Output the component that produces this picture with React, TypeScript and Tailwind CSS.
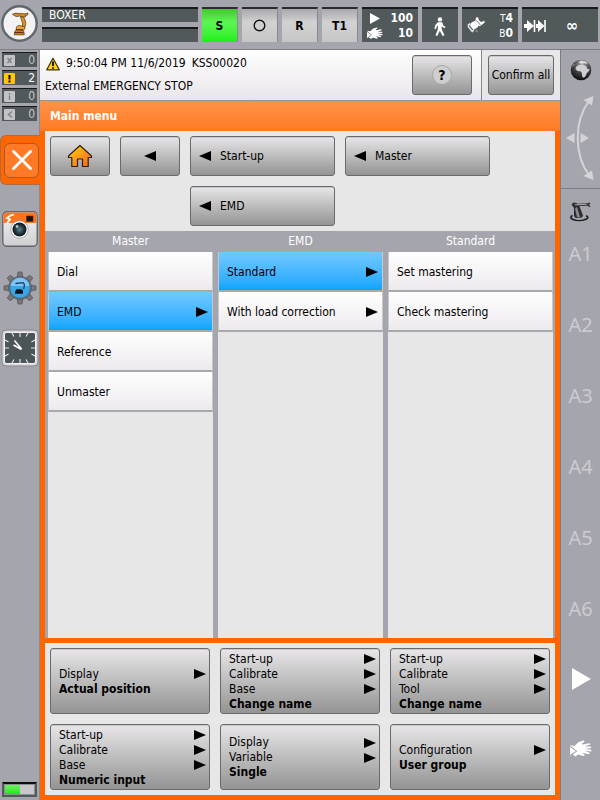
import type { ReactNode } from 'react';

const greyButton =
  'rounded-[3px] border border-[#6a6a6c] bg-linear-to-b from-[#e8e6e8] via-[#bebdbe] to-[#949494] shadow-[inset_0_1px_0_#c9c7c9]';
const darkPanel = 'border-t-2 border-[#17191a] bg-[#51595a] text-white';

function ArrowRight() {
  return (
    <svg className="h-3 w-3 shrink-0" viewBox="0 0 12 12" aria-hidden="true">
      <path d="M0 1 12 6 0 11z" fill="#000" />
    </svg>
  );
}

function ArrowLeft() {
  return (
    <svg className="h-3 w-3 shrink-0" viewBox="0 0 12 12" aria-hidden="true">
      <path d="M12 1 0 6l12 5z" fill="#000" />
    </svg>
  );
}

function Hand({ className }: { className: string }) {
  return (
    <svg className={className} viewBox="0 0 22 18" aria-hidden="true">
      <path
        d="M0 5.200 4.500 6 8 2.500 13 .6q1.600-.3 1.500 1L11.500 4 13 4.600 19 3.200q1.500 0 1.200 1.300L14.500 6.600l6-.1q1.500.6 0 1.800l-6 .6 6.500.8q1.200.9-.2 1.700l-6.500-.7 5 1.900q.8 1.100-.6 1.600L12 12.700l2.500 2q.5 1.300-1 1.400L8 14.500 5.500 16.500 2.500 14.200l3-3z"
        fill="#fff"
      />
      <path d="M0 6.500 5.500 11 0 15.500z" fill="#fff" />
      <path d="m.5 6.800 6.300 4.400L.5 15.300" stroke="#9a9aa0" strokeWidth=".9" fill="none" />
    </svg>
  );
}

function RobotLogo() {
  return (
    <svg className="h-[42px] w-10 shrink-0" viewBox="0 0 40 42" aria-label="Robot" role="img">
      <circle cx="19.500" cy="23.500" r="17.200" fill="#f3f2f4" stroke="#5f686a" strokeWidth="2.400" />
      <g stroke="#4a3312" strokeWidth=".7" strokeLinejoin="round">
        <path d="m12.500 14.300 2.500-1 10 .5 3-.8-.5 2-2.500.7.500 1.300-2.500.3-3-1.300-4 .5z" fill="#e08a1c" />
        <path d="m20.500 16.800 2.500-.3 2 3.500.8 3.500-1 4-2.800-.5.800-3z" fill="#e8941f" />
        <path d="m16.500 27 1.500-1.500 3.500.5 3 .8.500 2-2 1.700h-7z" fill="#f2a62a" />
        <path d="M14.800 31.500 16.500 30h6l1.300 1.500.5 3.300h-10z" fill="#d47b13" />
      </g>
      <path d="M14.500 32.500h9M16 29.500h7" stroke="#4c2c08" strokeWidth=".9" />
    </svg>
  );
}

function Walker() {
  return (
    <svg className="mt-px h-[19px] w-[12px]" viewBox="0 0 12 19" aria-hidden="true">
      <circle cx="6" cy="2.400" r="2.200" fill="#fff" />
      <path d="M3.800 5.300h4.400l1 3 2.300 1.700-1 1.200L7.600 9.500l.2 3 2.700 5.800-2 .7L5.800 13.800 3.300 19l-1.800-.8 2.300-5.700.2-4-1.200 1-.8 2.800-1.600-.5.900-3.800z" fill="#fff" />
    </svg>
  );
}

function ToolGlyph() {
  return (
    <svg className="h-[17px] w-[18px]" viewBox="0 0 18 17" aria-hidden="true">
      <path d="M4.500 5.500 8.500 3.500 12 8 11 10 6.500 13 3 8.500z" fill="#fff" />
      <path d="m8.500 3.500.5-3L11 .2l1 3L14 5l3.300-1.200.5 1.700L14 8.500l-2 .8z" fill="#fff" />
      <path d="M9.500 3.500 13.500 8" stroke="#51595a" strokeWidth=".8" />
      <path d="M3.500 6.500.8 8.500M1 9l4 5.200M6.500 13l-1.500 2" stroke="#dfe2e2" strokeWidth="1.700" fill="none" />
      <circle cx="9.500" cy="14" r="1.300" fill="#80888a" />
    </svg>
  );
}

function StepGlyph() {
  return (
    <svg className="h-[14px] w-[22px]" viewBox="0 0 22 14" aria-hidden="true">
      <path d="M0 5h3V1l7 6-7 6V9H0zM12 5h2V1l6.500 6-6.500 6V9h-2z" fill="#fff" />
      <path d="M10.500 1v12M21 1v12" stroke="#fff" strokeWidth="1.600" />
    </svg>
  );
}

function WarningTriangle() {
  return (
    <svg className="h-[14px] w-[14px] shrink-0" viewBox="0 0 14 14" aria-hidden="true">
      <path d="M7 1.200 13.300 12.800H.7z" fill="#ffd21a" stroke="#3a3008" strokeWidth="1.200" strokeLinejoin="round" />
      <path d="M7 4.500v4.500M7 10.200v1.500" stroke="#000" strokeWidth="1.700" />
    </svg>
  );
}

function House() {
  return (
    <svg className="h-[24px] w-[26px]" viewBox="0 0 26 24" aria-hidden="true">
      <defs>
        <linearGradient id="house" x1="0" y1="0" x2="1" y2="1">
          <stop offset="0" stopColor="#ffe000" />
          <stop offset=".6" stopColor="#ff8a1c" />
          <stop offset="1" stopColor="#ff6a10" />
        </linearGradient>
      </defs>
      <path d="M13 1.500 24.500 12v1.500h-3.300v9H15.500V15h-5v7.500H4.800v-9H1.500V12z" fill="url(#house)" stroke="#2a2018" strokeWidth="1.200" strokeLinejoin="round" />
    </svg>
  );
}

function Camera() {
  return (
    <svg className="h-9 w-9" viewBox="0 0 36 36" aria-hidden="true">
      <defs>
        <linearGradient id="camBody" x1="0" y1="0" x2="0" y2="1">
          <stop offset="0" stopColor="#f4f4f4" />
          <stop offset="1" stopColor="#cfcfd1" />
        </linearGradient>
        <radialGradient id="lens">
          <stop offset="0" stopColor="#5d8a8c" />
          <stop offset=".5" stopColor="#2a4350" />
          <stop offset="1" stopColor="#0c1014" />
        </radialGradient>
      </defs>
      <rect x=".8" y=".8" width="34.400" height="34.400" rx="4" fill="url(#camBody)" stroke="#66666a" strokeWidth="1.400" />
      <path d="M1.500 12V5a3.500 3.500 0 0 1 3.500-3.500h26A3.500 3.500 0 0 1 34.500 5v7z" fill="#ff7420" />
      <path d="M12 3.500 8.500 4.500 5 7l3 1.500L5 12" stroke="#fff" strokeWidth="1.800" fill="none" />
      <rect x="24.500" y="5" width="6.500" height="5.500" fill="#1a1512" stroke="#642b0a" strokeWidth=".6" />
      <circle cx="17.500" cy="18.500" r="8.800" fill="#fff" stroke="#9b9b9b" strokeWidth=".8" />
      <circle cx="17.500" cy="18.500" r="7" fill="url(#lens)" />
      <circle cx="15" cy="15.500" r="1.400" fill="#a9c3c4" />
    </svg>
  );
}

function Gear() {
  return (
    <svg className="h-[34px] w-[34px]" viewBox="0 0 34 34" aria-hidden="true">
      <g fill="#77777b" stroke="#525256" strokeWidth=".7">
        {[0, 45, 90, 135, 180, 225, 270, 315].map((angle) => (
          <path key={angle} d="M14 7 15 1h4L20 7z" transform={`rotate(${angle} 17 17)`} />
        ))}
        <circle cx="17" cy="17" r="11.500" />
      </g>
      <circle cx="17" cy="17" r="10.200" fill="#3aa6ea" stroke="#39678c" strokeWidth=".8" />
      <path d="M7.500 15a9.600 9.600 0 0 1 19 0z" fill="#7cc6f6" />
      <path d="m12.500 12.500 7.500-.8 1.500 2-.8 4.300" fill="none" stroke="#1c3f5c" strokeWidth="1.300" />
      <path d="M13.500 18.300h4.500l2 1v3.500h-8v-2.300z" fill="#06121c" />
    </svg>
  );
}

function Clock() {
  return (
    <svg className="h-[38px] w-[38px]" viewBox="0 0 38 38" aria-hidden="true">
      <rect x="1" y="1" width="36" height="36" rx="4" fill="#d9d9dc" stroke="#85858a" />
      <rect x="3.500" y="3.500" width="31" height="31" rx="2" fill="#4b5557" stroke="#f4f4f5" />
      <path d="M19 4v4M19 30v4M4 19h4M30 19h4M11 4l2 3.500M27 4l-2 3.500M11 34l2-3.500M27 34l-2-3.500M4 11l3.500 2M4 27l3.500-2M34 11l-3.500 2M34 27l-3.500-2" stroke="#e6e9e9" strokeWidth="1.100" />
      <path d="m20.500 20-7-8.500M20.500 20.500 12.500 16" stroke="#fff" strokeWidth="1.700" />
    </svg>
  );
}

function Globe() {
  return (
    <svg className="h-[22px] w-[22px]" viewBox="0 0 22 22" aria-hidden="true">
      <defs>
        <radialGradient id="globe" cx=".55" cy=".2" r=".8">
          <stop offset="0" stopColor="#a6a6a8" />
          <stop offset=".5" stopColor="#48484a" />
          <stop offset="1" stopColor="#0c0c0d" />
        </radialGradient>
      </defs>
      <circle cx="11" cy="11" r="10.300" fill="url(#globe)" />
      <path d="m6 8 2.500-2 4-.5L16 7l1.500 3 2.500.3-2 2.700-1.200 1-1.300 3.200-1.800 1.600-1.400-1-.5-4-1.300-1.500L7.500 12 5.500 10z" fill="#cfcfd1" />
      <path d="m8.500 3.500 2.500-2 5 1.200 2 2-4-.4-3 .5z" fill="#dcdcde" />
      <path d="M2 8.500 3.500 5l1.500.5z" fill="#8f8f91" />
    </svg>
  );
}

function JogArc() {
  return (
    <svg className="h-[86px] w-[30px]" viewBox="0 0 30 86" aria-hidden="true">
      <path d="M23 6C8 26 8 60 23 80" fill="none" stroke="#d4d4d8" strokeWidth="2" />
      <path d="m17.500 5 10-4-1.500 9.500zM17.500 81l10 4L26 75.500zM0 43l8.500-5v10zM23 43l-8.500-5v10z" fill="#d4d4d8" />
    </svg>
  );
}

function RobotGlyph() {
  return (
    <svg className="h-[22px] w-[22px]" viewBox="0 0 22 22" aria-hidden="true">
      <path d="M2.500 14.500C0 15.500.5 17.500 3 18.500c4 1.500 10 1.300 13.500-.5 2-1.200 1.500-2.500-.5-3.200" fill="none" stroke="#1d1d1f" strokeWidth="1.600" />
      <path d="M1.500 3.500 3.500 1.500 6.500 2l2.500 2 4 10.500-1 2-6.500.5-1.500-2L4 7z" fill="#2d2d2f" />
      <path d="M5 7.500 7 16h3L7 6z" fill="#8b8b8d" />
      <path d="m2.500 3.500 4-.8 10.500-.4 2.500-.8 1 1-1.500 1.200 1.500 1.500-1 1-2-1.500L7 5.300z" fill="#39393b" />
      <path d="M5 3.800 16.500 3.300" stroke="#b9b9bb" strokeWidth=".9" />
    </svg>
  );
}

type StatusKind = 'error' | 'warning' | 'info' | 'wait';

function StatusIcon({ kind }: { kind: StatusKind }) {
  const active = kind === 'warning';
  const glyphs: Record<StatusKind, ReactNode> = {
    error: <path d="m3.500 3 4 5M7.500 3l-4 5" />,
    warning: <path d="M5.500 2v4.500M5.500 7.500V9.500" strokeWidth="2" />,
    info: <path d="M5.500 2v1.500M5.500 4.500V9" />,
    wait: <path d="M8 2.500 4.500 5.500 8 8.500" />,
  };
  return (
    <svg className="h-[11px] w-[11px]" viewBox="0 0 11 11" aria-hidden="true">
      <rect width="11" height="11" rx="1" fill={active ? '#ffc800' : '#c3c3c5'} />
      <g fill="none" stroke={active ? '#000' : '#808285'} strokeWidth="1.500">
        {glyphs[kind]}
      </g>
    </svg>
  );
}

const statuses: { kind: StatusKind; count: number }[] = [
  { kind: 'error', count: 0 },
  { kind: 'warning', count: 2 },
  { kind: 'info', count: 0 },
  { kind: 'wait', count: 0 },
];

function Header() {
  const mode =
    'flex w-9 items-center justify-center border-t-2 border-r border-t-[#2b2b2d] border-r-[#8a8a8e] font-bold';
  const grey = 'bg-linear-to-b from-[#a9a9ab] via-[#d2d2d3] via-40% to-[#c6c6c7]';
  return (
    <header className="flex h-[50px] border-b border-[#7d7d82]">
      <RobotLogo />
      <div className="flex min-w-0 flex-1 gap-1 px-[2px] py-[7px]">
        <div className="flex min-w-0 flex-1 flex-col justify-between">
          <div className={`${darkPanel} h-[15px] pl-[7px] leading-[13px]`}>BOXER</div>
          <div className={`${darkPanel} h-[15px]`} />
        </div>
        <button className={`${mode} bg-linear-to-b from-[#46c832] via-[#5cf552] via-40% to-[#18f010]`}>S</button>
        <button className={`${mode} ${grey}`} aria-label="Drives">
          <svg className="h-[13px] w-[13px]" viewBox="0 0 13 13" aria-hidden="true">
            <circle cx="6.500" cy="6.500" r="5.300" fill="none" stroke="#111" strokeWidth="1.400" />
          </svg>
        </button>
        <button className={`${mode} ${grey}`}>R</button>
        <button className={`${mode} ${grey}`}>T1</button>
        <button className={`${darkPanel} flex w-14 flex-col justify-center px-[5px] leading-[15px] font-bold`}>
          <span className="flex w-full items-center justify-between">
            <svg className="ml-[3px] h-[11px] w-[10px]" viewBox="0 0 10 11" aria-hidden="true">
              <path d="M0 0v11l10-5.500z" fill="#fff" />
            </svg>
            100
          </span>
          <span className="flex w-full items-center justify-between">
            <Hand className="h-[13px] w-[16px]" />
            10
          </span>
        </button>
        <button className={`${darkPanel} flex w-9 items-center justify-center`} aria-label="Walk">
          <Walker />
        </button>
        <button className={`${darkPanel} flex w-14 items-center justify-between px-[5px] font-bold`}>
          <ToolGlyph />
          <span className="text-right leading-[15px]">
            <span className="block"><span className="text-[10px] font-normal">T</span>4</span>
            <span className="block"><span className="text-[10px] font-normal">B</span>0</span>
          </span>
        </button>
        <button className={`${darkPanel} flex w-[76px] items-center pl-[2px] text-base font-bold`}>
          <StepGlyph />
          <span className="flex-1 text-center">∞</span>
        </button>
      </div>
    </header>
  );
}

function LeftBar() {
  return (
    <aside className="flex w-10 shrink-0 flex-col border-r border-[#8b8b90] pb-[3px]">
      <div className="flex flex-col gap-[3px] px-[2px] pt-[2px]">
        {statuses.map(({ kind, count }) => (
          <button
            key={kind}
            className={`flex h-[15px] items-center justify-between border-t border-[#17191a] bg-[#51595a] px-[2px] leading-[14px] ${kind === 'warning' ? 'text-white' : 'text-[#c6c6ca]'}`}
          >
            <StatusIcon kind={kind} />
            {count}
          </button>
        ))}
      </div>
      <div className="mt-[14px] -mr-px flex h-[50px] items-center justify-end rounded-l-md border border-r-0 border-[#b06a3c] bg-[#ff6600] pr-px">
        <button className="flex h-[35px] w-[35px] items-center justify-center rounded-md border border-[#a85a28] bg-[#ff7a26]" aria-label="Close">
          <svg className="h-5 w-5" viewBox="0 0 20 20" aria-hidden="true">
            <path d="m1.500 1.500 17 17M18.500 1.500l-17 17" stroke="#fff" strokeWidth="2.800" strokeLinecap="round" />
          </svg>
        </button>
      </div>
      <div className="mt-[26px] flex flex-col items-center gap-6">
        <button aria-label="Screenshot"><Camera /></button>
        <button aria-label="Robot settings"><Gear /></button>
        <button aria-label="Clock"><Clock /></button>
      </div>
      <div className="mx-[2px] mt-auto flex h-[15px] border-2 border-t-[#0c0e0e] border-r-[#51595a] border-b-[#51595a] border-l-[#51595a] bg-[#8b9192] p-px" role="img" aria-label="Charge">
        <span className="w-1/2 bg-linear-to-b from-[#6df060] to-[#16e60c]" />
        <span className="w-1/2 bg-[#c8c8ca]" />
      </div>
    </aside>
  );
}

function RightBar() {
  return (
    <aside className="flex w-10 shrink-0 flex-col items-center border-l border-[#7d7d82]">
      <button className="mt-[9px]" aria-label="World frame"><Globe /></button>
      <div className="mt-[14px] flex h-[94px] w-full justify-center border-b border-[#7d7d82]">
        <JogArc />
      </div>
      <button className="mt-[12px]" aria-label="Axis frame"><RobotGlyph /></button>
      <div className="mt-[11px] flex flex-col text-center font-['Noto_Sans',sans-serif] text-xl text-[#cbcbd1]">
        {['A1', 'A2', 'A3', 'A4', 'A5', 'A6'].map((axis) => (
          <div key={axis} className="h-[71px] leading-[40px]">{axis}</div>
        ))}
      </div>
      <button className="mt-[8px]" aria-label="Run">
        <svg className="h-[22px] w-[20px]" viewBox="0 0 20 22" aria-hidden="true">
          <path d="M1 0v22l19-11z" fill="#fff" />
        </svg>
      </button>
      <button className="mt-[50px]" aria-label="Jog override"><Hand className="h-[18px] w-[22px]" /></button>
    </aside>
  );
}

function MessageBar() {
  return (
    <div className="flex h-[51px] border-b border-[#98989c] bg-[#e7e7e7]">
      <div className="flex min-w-0 flex-1 items-center justify-between border-r border-[#88888c] bg-linear-to-b from-white to-[#e9e6e9] pr-[9px] pl-[5px]">
        <div className="leading-[23px]">
          <div className="flex items-center gap-[6px] pl-px">
            <WarningTriangle />
            <span>9:50:04 PM 11/6/2019</span>
            <span>KSS00020</span>
          </div>
          <div>External EMERGENCY STOP</div>
        </div>
        <button className={`${greyButton} flex h-10 w-[60px] items-center justify-center`} aria-label="Help">
          <span className="flex h-5 w-5 items-center justify-center rounded-full border border-[#a5a5a7] bg-[#cfcecf] text-sm font-bold">?</span>
        </button>
      </div>
      <div className="flex items-center px-[6px]">
        <button className={`${greyButton} h-10 w-[66px] whitespace-nowrap`}>Confirm all</button>
      </div>
    </div>
  );
}

const columns = [
  {
    title: 'Master',
    items: [
      { label: 'Dial' },
      { label: 'EMD', more: true, selected: true },
      { label: 'Reference' },
      { label: 'Unmaster' },
    ],
  },
  {
    title: 'EMD',
    items: [
      { label: 'Standard', more: true, selected: true },
      { label: 'With load correction', more: true },
    ],
  },
  { title: 'Standard', items: [{ label: 'Set mastering' }, { label: 'Check mastering' }] },
] as { title: string; items: { label: string; more?: boolean; selected?: boolean }[] }[];

const shortcuts = [
  { path: ['Display'], name: 'Actual position' },
  { path: ['Start-up', 'Calibrate', 'Base'], name: 'Change name' },
  { path: ['Start-up', 'Calibrate', 'Tool'], name: 'Change name' },
  { path: ['Start-up', 'Calibrate', 'Base'], name: 'Numeric input' },
  { path: ['Display', 'Variable'], name: 'Single' },
  { path: ['Configuration'], name: 'User group' },
];

function MainMenu() {
  return (
    <section className="flex flex-1 flex-col bg-[#ff6600] px-[5px] pb-[5px]">
      <h1 className="-mx-[5px] h-[30px] bg-linear-to-b from-[#ff9248] to-[#ff7a20] pl-[10px] leading-[30px] font-bold text-white">
        Main menu
      </h1>
      <nav className="flex items-start gap-[10px] bg-[#e7e7e7] p-[5px]" aria-label="Menu path">
        <button className={`${greyButton} flex h-10 w-[60px] shrink-0 items-center justify-center`} aria-label="Home">
          <House />
        </button>
        <button className={`${greyButton} flex h-10 w-[60px] shrink-0 items-center justify-center`} aria-label="Back">
          <ArrowLeft />
        </button>
        <div className="flex flex-wrap gap-[10px]">
          {['Start-up', 'Master', 'EMD'].map((step) => (
            <button key={step} className={`${greyButton} flex h-10 w-[145px] items-center gap-[9px] pl-[8px] text-left`}>
              <ArrowLeft />
              {step}
            </button>
          ))}
        </div>
      </nav>
      <div className="grid flex-1 grid-cols-3 gap-[5px] bg-[#a5a5ad] pr-[2px] pl-[3px]">
        {columns.map((column) => (
          <div key={column.title} className="flex flex-col">
            <h2 className="h-[21px] text-center leading-[21px] text-white">{column.title}</h2>
            <ul className="flex-1 bg-[#e7e7e7]">
              {column.items.map((item) => (
                <li key={item.label}>
                  <button
                    className={`flex h-10 w-full items-center justify-between border-x border-b-2 border-x-[#c8c8cb] border-b-[#a9a9ad] bg-linear-to-b pt-px pr-[4px] pl-[8px] text-left ${item.selected ? 'from-[#6fcaff] to-[#00a5ff]' : 'from-white to-[#edeaed]'}`}
                  >
                    {item.label}
                    {item.more && <ArrowRight />}
                  </button>
                </li>
              ))}
            </ul>
          </div>
        ))}
      </div>
      <div className="mt-[5px] grid grid-cols-3 gap-[10px] bg-[#e7e7e7] p-[5px]">
        {shortcuts.map((shortcut) => (
          <button
            key={shortcut.path.join() + shortcut.name}
            className={`${greyButton} flex h-[66px] flex-col justify-center pt-px pr-[3px] pl-[8px] text-left leading-[15px]`}
          >
            {shortcut.path.map((step) => (
              <span key={step} className="flex w-full items-center justify-between">
                {step}
                <ArrowRight />
              </span>
            ))}
            <span className="font-bold">{shortcut.name}</span>
          </button>
        ))}
      </div>
    </section>
  );
}

export default function App() {
  return (
    <div className="flex min-h-screen flex-col bg-[#a5a5ad] font-['DejaVu_Sans_Condensed','DejaVu_Sans',sans-serif] text-xs text-black">
      <Header />
      <div className="flex flex-1">
        <LeftBar />
        <main className="flex min-w-0 flex-1 flex-col">
          <MessageBar />
          <MainMenu />
        </main>
        <RightBar />
      </div>
    </div>
  );
}
